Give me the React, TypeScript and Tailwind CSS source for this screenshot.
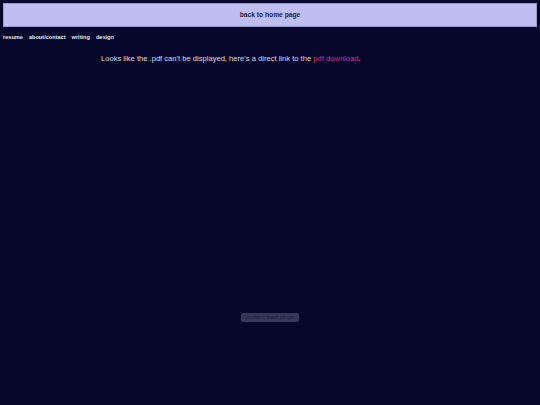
import React from 'react';

const navLinks = ['resume', 'about/contact', 'writing', 'design'];

export default function App() {
  return (
    <div className="h-[405px] w-full bg-[#07072b] font-['Liberation_Sans',Arial,sans-serif] overflow-hidden">
      {/* Banner */}
      <a
        href="#"
        className="mx-[3px] mt-[3px] flex h-[24px] items-center justify-center border border-[#9a9acc] bg-[#bebef1] text-[6.7px] font-bold text-[#1d1d45]"
      >
        back to home page
      </a>

      {/* Nav */}
      <nav className="mt-[5px] flex gap-[6px] px-[3px] text-[5.6px] font-bold leading-[10px] text-[#e8e8f0]">
        {navLinks.map((link) => (
          <a key={link} href="#">
            {link}
          </a>
        ))}
      </nav>

      {/* Message */}
      <p className="mt-[12px] pl-[101px] text-[7.6px] leading-[10px] text-[#dcdcea]">
        Looks like the .pdf can't be displayed, here's a direct link to the{' '}
        <a href="#" className="text-[#d0288a]">
          pdf download
        </a>
        .
      </p>

      {/* Embed area */}
      <div className="flex h-[506px] items-center justify-center">
        <div className="rounded-[2px] bg-[#38385a] px-[2px] text-[6px] leading-[9px] text-[#1d1d3d]">
          Couldn't load plugin.
        </div>
      </div>
    </div>
  );
}
